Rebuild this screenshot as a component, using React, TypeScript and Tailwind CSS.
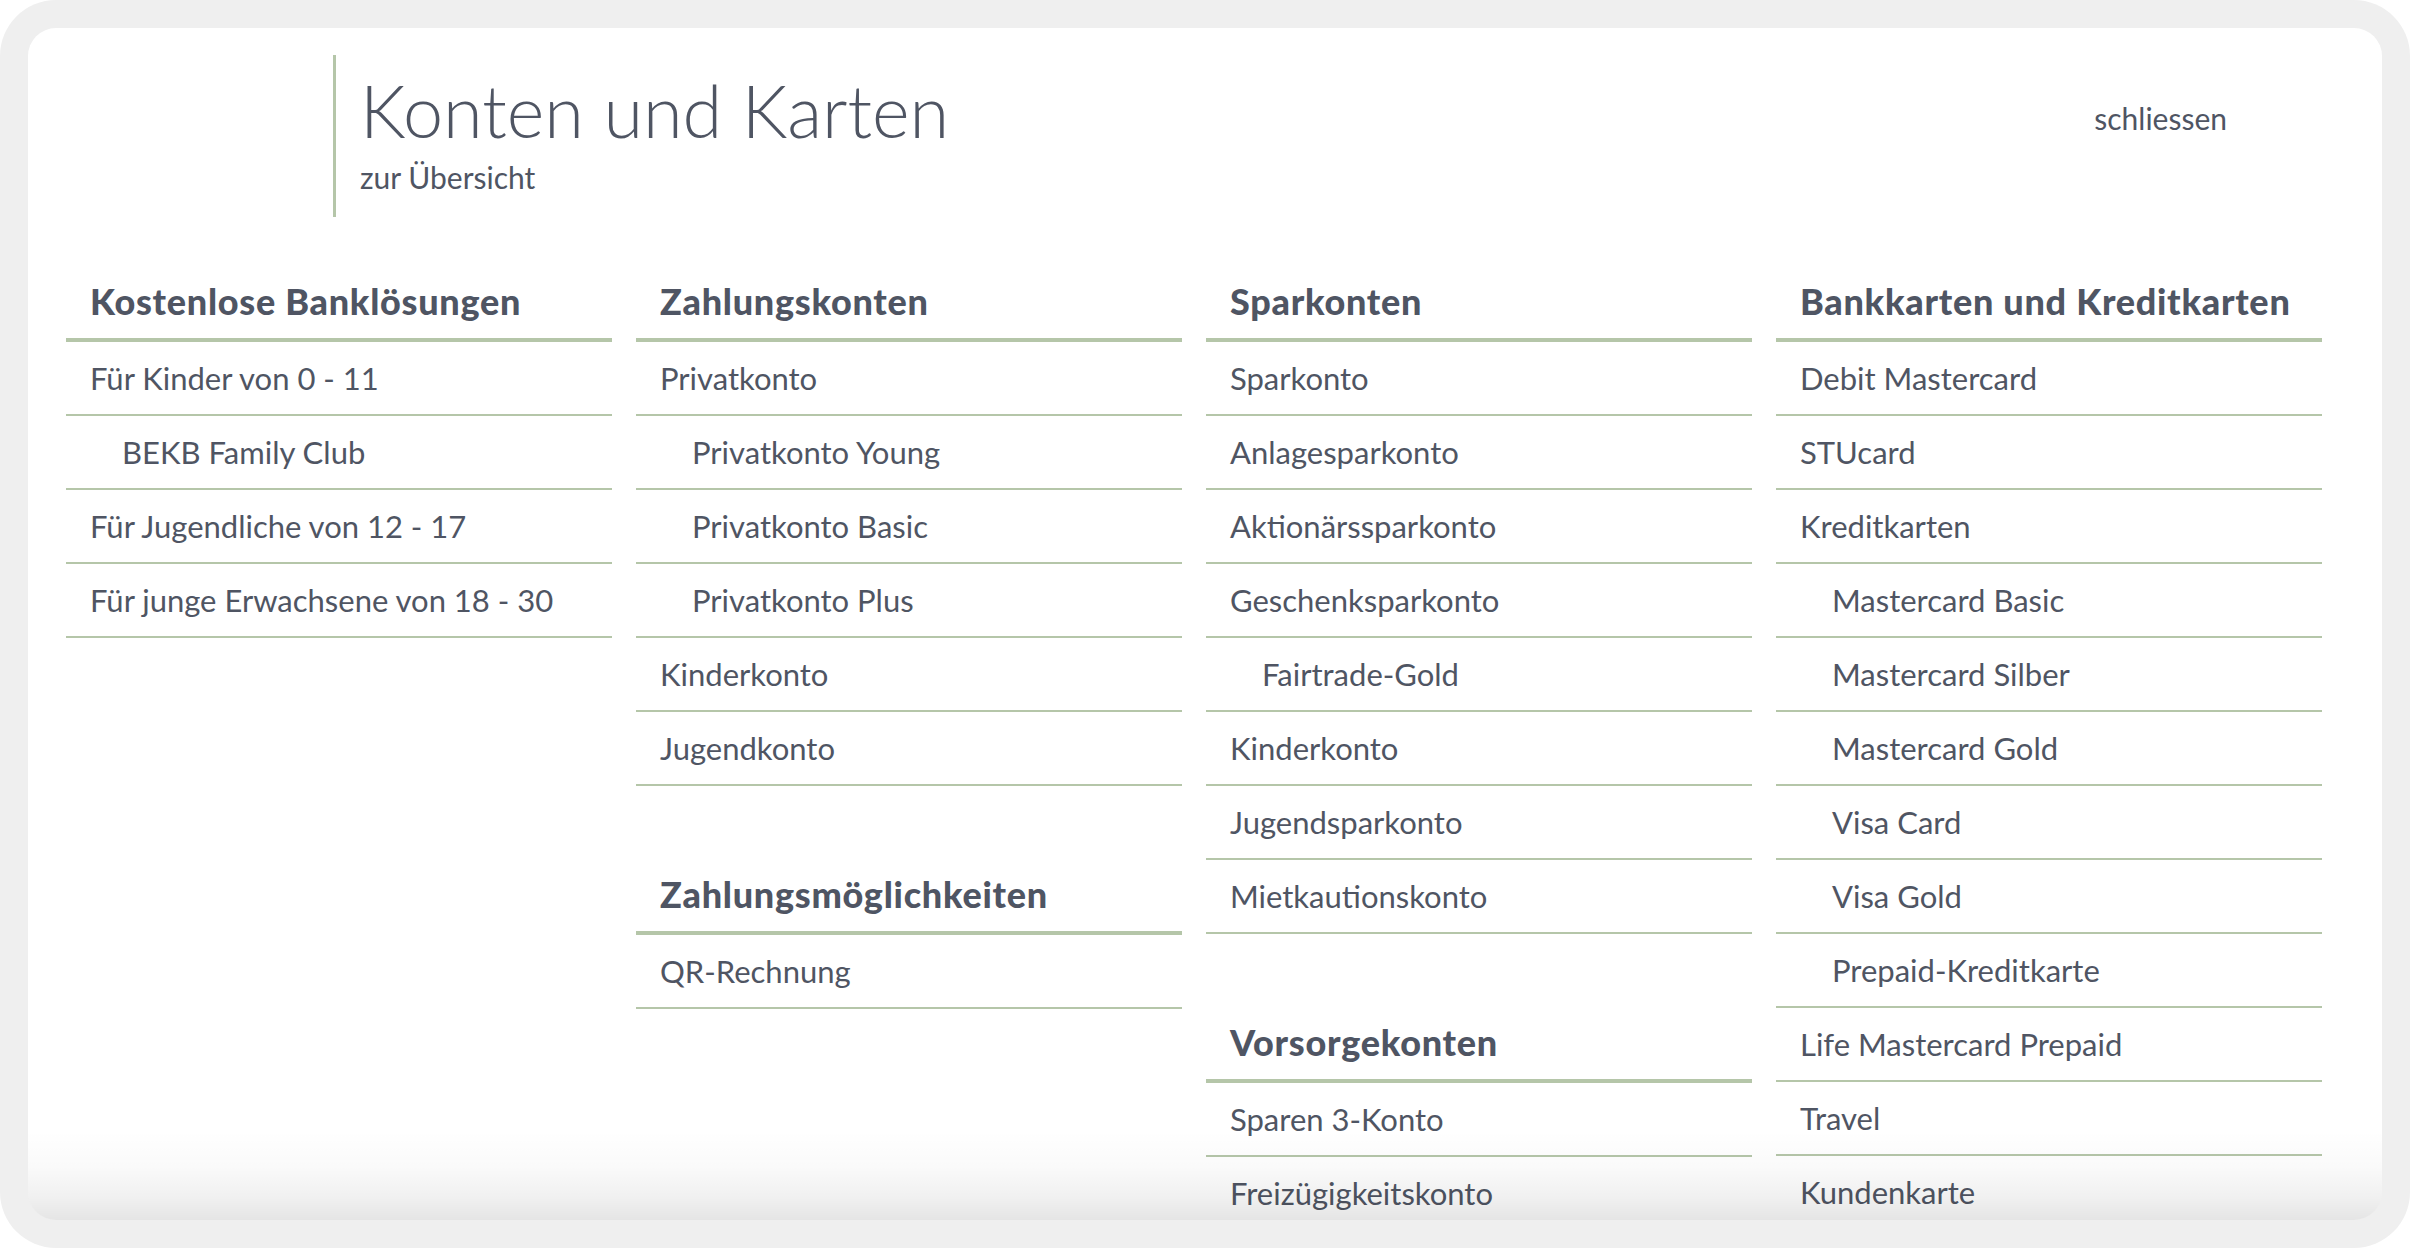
type Item = { label: string; sub?: boolean };
type Section = { title: string; items: Item[] };

const columns: Section[][] = [
  [
    {
      title: "Kostenlose Banklösungen",
      items: [
        { label: "Für Kinder von 0 - 11" },
        { label: "BEKB Family Club", sub: true },
        { label: "Für Jugendliche von 12 - 17" },
        { label: "Für junge Erwachsene von 18 - 30" },
      ],
    },
  ],
  [
    {
      title: "Zahlungskonten",
      items: [
        { label: "Privatkonto" },
        { label: "Privatkonto Young", sub: true },
        { label: "Privatkonto Basic", sub: true },
        { label: "Privatkonto Plus", sub: true },
        { label: "Kinderkonto" },
        { label: "Jugendkonto" },
      ],
    },
    {
      title: "Zahlungsmöglichkeiten",
      items: [{ label: "QR-Rechnung" }],
    },
  ],
  [
    {
      title: "Sparkonten",
      items: [
        { label: "Sparkonto" },
        { label: "Anlagesparkonto" },
        { label: "Aktionärssparkonto" },
        { label: "Geschenksparkonto" },
        { label: "Fairtrade-Gold", sub: true },
        { label: "Kinderkonto" },
        { label: "Jugendsparkonto" },
        { label: "Mietkautionskonto" },
      ],
    },
    {
      title: "Vorsorgekonten",
      items: [
        { label: "Sparen 3-Konto" },
        { label: "Freizügigkeitskonto" },
        { label: "Vorsorgefonds" },
      ],
    },
  ],
  [
    {
      title: "Bankkarten und Kreditkarten",
      items: [
        { label: "Debit Mastercard" },
        { label: "STUcard" },
        { label: "Kreditkarten" },
        { label: "Mastercard Basic", sub: true },
        { label: "Mastercard Silber", sub: true },
        { label: "Mastercard Gold", sub: true },
        { label: "Visa Card", sub: true },
        { label: "Visa Gold", sub: true },
        { label: "Prepaid-Kreditkarte", sub: true },
        { label: "Life Mastercard Prepaid" },
        { label: "Travel" },
        { label: "Kundenkarte" },
        { label: "Maestro-Karte" },
      ],
    },
  ],
];

export default function App() {
  return (
    <div className="w-[2410px] h-[1248px] bg-white font-['Lato',sans-serif] text-[#4f5563]">
      <div className="h-full rounded-[56px] bg-[#efefef] p-[28px]">
        <div className="relative h-full rounded-[28px] bg-white overflow-hidden">
          {/* kopfzeile */}
          <div className="flex items-start justify-between pt-[27px]">
            <div className="ml-[305px] h-[162px] border-l-[3px] border-[#b5c6a9] pl-[24px] pt-[19px]">
              <h1 className="text-[72px] leading-none font-light">Konten und Karten</h1>
              <p className="mt-[16px] text-[30px] leading-none">zur Übersicht</p>
            </div>
            <a href="#" className="mt-[48px] mr-[155px] text-[30px] leading-none">
              schliessen
            </a>
          </div>

          <div className="mt-[66px] ml-[38px] mr-[60px] grid grid-cols-4 gap-x-[24px]">
            {columns.map((col, ci) => (
              <div key={ci}>
                {col.map((sec, si) => (
                  <div key={si} className={si > 0 ? "mt-[90px]" : ""}>
                    <h2 className="border-b-4 border-[#b5c6a9] pb-[19px] pl-[24px] text-[36px] leading-none font-black tracking-[0.02em]">
                      {sec.title}
                    </h2>
                    <ul>
                      {sec.items.map((it, i) => (
                        <li
                          key={i}
                          className={
                            "flex h-[74px] items-center border-b-2 border-[#b5c6a9] text-[31px] leading-none " +
                            (it.sub ? "pl-[56px]" : "pl-[24px]")
                          }
                        >
                          {it.label}
                        </li>
                      ))}
                    </ul>
                  </div>
                ))}
              </div>
            ))}
          </div>

          <div className="pointer-events-none absolute inset-x-0 bottom-0 h-[90px] bg-[linear-gradient(to_bottom,rgba(0,0,0,0)_0%,rgba(0,0,0,0.02)_40%,rgba(0,0,0,0.06)_75%,rgba(0,0,0,0.1)_100%)]" />
        </div>
      </div>
    </div>
  );
}
